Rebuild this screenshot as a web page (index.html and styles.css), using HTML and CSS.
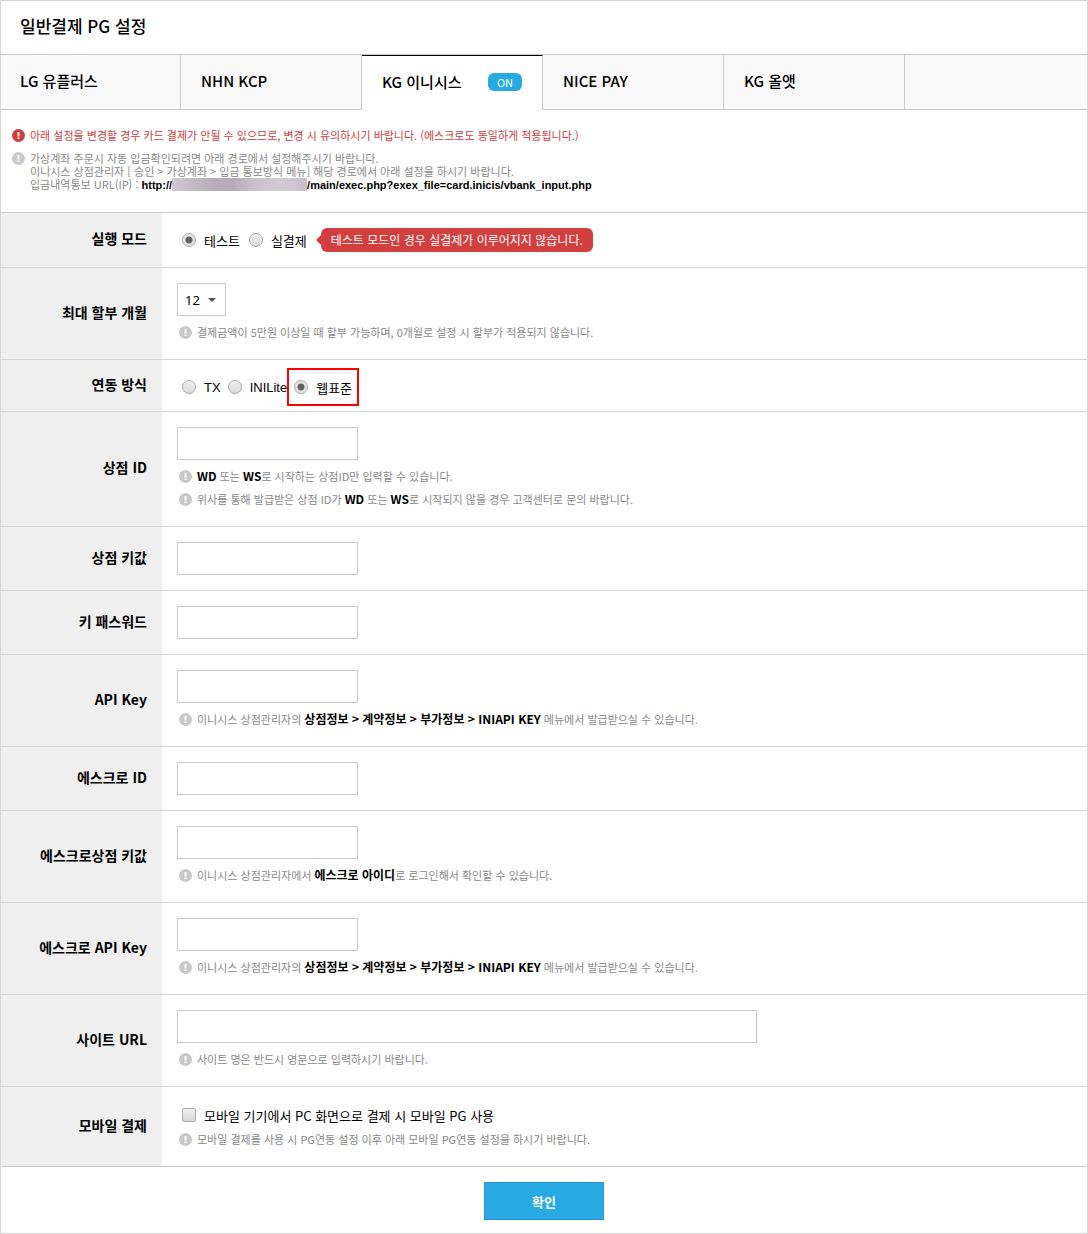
FILE: index.html
```html
<!DOCTYPE html>
<html lang="ko">
<head>
    <meta charset="UTF-8">
    <meta name="viewport" content="width=device-width, initial-scale=1.0">
    <title>일반결제 PG 설정</title>
    <link rel="stylesheet" href="styles.css">
</head>
<body>
    <svg width="0" height="0" class="sprite" aria-hidden="true">
        <symbol id="icon-notice" viewBox="0 0 13 13">
            <circle cx="6.5" cy="6.5" r="6.5" fill="currentColor"/>
            <path d="M5.5 3h2v4.5h-2zM5.5 8.5h2v1.5h-2z" fill="#fff"/>
        </symbol>
    </svg>

    <form class="pg-config">
        <h1>일반결제 PG 설정</h1>

        <nav class="tabs">
            <a href="#">LG 유플러스</a>
            <a href="#">NHN KCP</a>
            <a href="#" class="active">KG 이니시스 <span class="on">ON</span></a>
            <a href="#">NICE PAY</a>
            <a href="#">KG 올앳</a>
        </nav>

        <div class="guide">
            <p class="note warning">
                <svg class="icon"><use href="#icon-notice"/></svg>
                <span>아래 설정을 변경할 경우 카드 결제가 안될 수 있으므로, 변경 시 유의하시기 바랍니다. (에스크로도 동일하게 적용됩니다.)</span>
            </p>
            <p class="note">
                <svg class="icon"><use href="#icon-notice"/></svg>
                <span>
                    가상계좌 주문시 자동 입금확인되려면 아래 경로에서 설정해주시기 바랍니다.<br>
                    이니시스 상점관리자 [ 승인 &gt; 가상계좌 &gt; 입금 통보방식 메뉴] 해당 경로에서 아래 설정을 하시기 바랍니다.<br>
                    입금내역통보 URL(IP) : <strong class="url">http://<span class="masked"></span>/main/exec.php?exex_file=card.inicis/vbank_input.php</strong>
                </span>
            </p>
        </div>

        <table>
            <tr>
                <th scope="row">실행 모드</th>
                <td>
                    <div class="choices">
                        <label><input type="radio" name="mode" checked>테스트</label>
                        <label><input type="radio" name="mode">실결제</label>
                        <span class="bubble">테스트 모드인 경우 실결제가 이루어지지 않습니다.</span>
                    </div>
                </td>
            </tr>
            <tr>
                <th scope="row"><label for="quota">최대 할부 개월</label></th>
                <td>
                    <div class="select">
                        <select id="quota">
                            <option>0</option>
                            <option>3</option>
                            <option>6</option>
                            <option selected>12</option>
                        </select>
                    </div>
                    <div class="notes">
                        <p class="note"><svg class="icon"><use href="#icon-notice"/></svg><span>결제금액이 5만원 이상일 때 할부 가능하며, 0개월로 설정 시 할부가 적용되지 않습니다.</span></p>
                    </div>
                </td>
            </tr>
            <tr class="method">
                <th scope="row">연동 방식</th>
                <td>
                    <div class="choices">
                        <label><input type="radio" name="method">TX</label>
                        <label><input type="radio" name="method">INILite</label>
                        <label class="marked"><input type="radio" name="method" checked>웹표준</label>
                    </div>
                </td>
            </tr>
            <tr>
                <th scope="row"><label for="mall-id">상점 ID</label></th>
                <td>
                    <input type="text" id="mall-id">
                    <div class="notes">
                        <p class="note"><svg class="icon"><use href="#icon-notice"/></svg><span><strong>WD</strong> 또는 <strong>WS</strong>로 시작하는 상점ID만 입력할 수 있습니다.</span></p>
                        <p class="note"><svg class="icon"><use href="#icon-notice"/></svg><span>위사를 통해 발급받은 상점 ID가 <strong>WD</strong> 또는 <strong>WS</strong>로 시작되지 않을 경우 고객센터로 문의 바랍니다.</span></p>
                    </div>
                </td>
            </tr>
            <tr>
                <th scope="row"><label for="mall-key">상점 키값</label></th>
                <td><input type="text" id="mall-key"></td>
            </tr>
            <tr>
                <th scope="row"><label for="key-password">키 패스워드</label></th>
                <td><input type="text" id="key-password"></td>
            </tr>
            <tr>
                <th scope="row"><label for="api-key">API Key</label></th>
                <td>
                    <input type="text" id="api-key">
                    <div class="notes">
                        <p class="note"><svg class="icon"><use href="#icon-notice"/></svg><span>이니시스 상점관리자의 <strong>상점정보 &gt; 계약정보 &gt; 부가정보 &gt; INIAPI KEY</strong> 메뉴에서 발급받으실 수 있습니다.</span></p>
                    </div>
                </td>
            </tr>
            <tr>
                <th scope="row"><label for="escrow-id">에스크로 ID</label></th>
                <td><input type="text" id="escrow-id"></td>
            </tr>
            <tr>
                <th scope="row"><label for="escrow-key">에스크로상점 키값</label></th>
                <td>
                    <input type="text" id="escrow-key">
                    <div class="notes">
                        <p class="note"><svg class="icon"><use href="#icon-notice"/></svg><span>이니시스 상점관리자에서 <strong>에스크로 아이디</strong>로 로그인해서 확인할 수 있습니다.</span></p>
                    </div>
                </td>
            </tr>
            <tr>
                <th scope="row"><label for="escrow-api-key">에스크로 API Key</label></th>
                <td>
                    <input type="text" id="escrow-api-key">
                    <div class="notes">
                        <p class="note"><svg class="icon"><use href="#icon-notice"/></svg><span>이니시스 상점관리자의 <strong>상점정보 &gt; 계약정보 &gt; 부가정보 &gt; INIAPI KEY</strong> 메뉴에서 발급받으실 수 있습니다.</span></p>
                    </div>
                </td>
            </tr>
            <tr>
                <th scope="row"><label for="site-url">사이트 URL</label></th>
                <td>
                    <input type="text" id="site-url" class="wide">
                    <div class="notes">
                        <p class="note"><svg class="icon"><use href="#icon-notice"/></svg><span>사이트 명은 반드시 영문으로 입력하시기 바랍니다.</span></p>
                    </div>
                </td>
            </tr>
            <tr>
                <th scope="row">모바일 결제</th>
                <td>
                    <div class="choices mobile">
                        <label><input type="checkbox" name="mobile">모바일 기기에서 PC 화면으로 결제 시 모바일 PG 사용</label>
                    </div>
                    <p class="note"><svg class="icon"><use href="#icon-notice"/></svg><span>모바일 결제를 사용 시 PG연동 설정 이후 아래 모바일 PG연동 설정을 하시기 바랍니다.</span></p>
                </td>
            </tr>
        </table>

        <div class="buttons">
            <button type="submit">확인</button>
        </div>
    </form>
</body>
</html>
```
FILE: styles.css
```css
* {
    margin: 0;
    padding: 0;
    box-sizing: border-box;
}

body {
    font-family: "Noto Sans CJK KR", sans-serif;
    font-size: 13px;
    color: #000;
    background: #fff;
}

.sprite {
    position: absolute;
}

.pg-config {
    border: 1px solid #d6d6d6;
}

h1 {
    padding: 0 19px 4px;
    font-size: 17px;
    font-weight: 500;
    line-height: 49px;
}

/* tabs */
.tabs {
    display: flex;
    height: 56px;
    border-top: 1px solid #c9c9c9;
    border-bottom: 1px solid #c9c9c9;
    background: #f9f9f9;
}

.tabs a {
    display: flex;
    justify-content: space-between;
    align-items: center;
    width: 181px;
    padding: 0 20px 3px;
    border-right: 1px solid #c9c9c9;
    color: #000;
    font-size: 15px;
    font-weight: 500;
    text-decoration: none;
}

.tabs a:first-child {
    width: 180px;
    padding-left: 19px;
}

.tabs a.active {
    margin-bottom: -1px;
    border-top: 1px solid #000;
    background: #fff;
}

.tabs .on {
    width: 34px;
    border-radius: 6px;
    background: #27aae1;
    color: #fff;
    font-size: 11px;
    font-weight: 400;
    line-height: 18px;
    text-align: center;
}

/* notes */
.note {
    display: flex;
    gap: 5px;
    padding: 5px 2px;
    color: #888;
    font-size: 11px;
    line-height: 13px;
}

.note.warning {
    color: #d33b3b;
}

.note strong {
    color: #000;
    font-size: 12px;
    line-height: 11px;
}

.note .icon {
    flex: none;
    width: 13px;
    height: 13px;
    color: #c9c9c9;
}

.note.warning .icon {
    color: #d33b3b;
}

.guide {
    padding: 14px 9px 16px;
    border-bottom: 1px solid #c9c9c9;
}

.note .url {
    font-family: "Liberation Sans", sans-serif;
    font-size: 11px;
}

.masked {
    display: inline-block;
    width: 135px;
    height: 13px;
    background: linear-gradient(90deg, #cfc8d1, #b9adbb 30%, #b5aab9 45%, #c9c0cb 60%, #d3ccd4 80%, #c8bfca);
    vertical-align: top;
}

/* settings */
table {
    width: 100%;
    border-collapse: collapse;
}

th,
td {
    padding: 15px;
    border-bottom: 1px solid #d6d6d6;
}

tr:last-child th,
tr:last-child td {
    border-bottom-color: #c9c9c9;
}

th {
    width: 161px;
    padding: 10px 15px 14px 10px;
    background: #efefef;
    font-size: 14px;
    line-height: 20px;
    text-align: right;
}

input[type="text"] {
    display: block;
    width: 181px;
    height: 33px;
    padding: 0 8px;
    border: 1px solid #c9c9c9;
    font: inherit;
}

input[type="text"].wide {
    width: 100%;
    max-width: 580px;
}

.notes {
    margin-top: 5px;
}

.select {
    position: relative;
    width: 49px;
}

.select select {
    display: block;
    width: 100%;
    height: 33px;
    padding: 0 7px;
    border: 1px solid #c9c9c9;
    background: #fff;
    color: #000;
    font-family: "Noto Sans", sans-serif;
    font-size: 13px;
    appearance: none;
}

.select::after {
    content: "";
    position: absolute;
    top: 15px;
    right: 10px;
    border: 4px solid transparent;
    border-top-color: #555;
    border-bottom: 0;
    pointer-events: none;
}

.choices {
    display: flex;
    align-items: center;
    gap: 9px;
    height: 24px;
    padding-left: 5px;
}

.choices.mobile {
    height: 26px;
}

.choices label {
    display: flex;
    align-items: center;
    gap: 8px;
}

.choices input {
    width: 14px;
    height: 14px;
    border: 1px solid #ababab;
    border-radius: 50%;
    background: linear-gradient(#efefef, #d9d9d9);
    appearance: none;
}

.choices input[type="checkbox"] {
    border-radius: 2px;
}

.choices input[type="radio"]:checked {
    background: radial-gradient(circle, #606060 3px, #e4e4e4 4px);
}

.method td {
    padding-bottom: 12px;
    font-family: "Liberation Sans", "Noto Sans CJK KR", sans-serif;
}

.method .choices {
    gap: 7px;
}

.choices .marked {
    height: 34px;
    margin-left: -5px;
    padding: 0 5px;
    outline: 2px solid #f00;
}

.bubble {
    position: relative;
    margin-left: 5px;
    padding: 0 10px;
    border-radius: 6px;
    background: #d33f3f;
    color: #fff;
    font-size: 12px;
    line-height: 24px;
}

.bubble::before {
    content: "";
    position: absolute;
    top: 7px;
    left: -5px;
    border: 5px solid transparent;
    border-right-color: #d33f3f;
    border-left: 0;
}

.buttons {
    padding: 15px 0 13px;
    text-align: center;
}

.buttons button {
    display: inline-block;
    width: 120px;
    height: 38px;
    border: 1px solid #2b93d1;
    background: #27aae1;
    color: #fff;
    font: bold 13px "Noto Sans CJK KR", sans-serif;
    vertical-align: top;
    cursor: pointer;
}
```
